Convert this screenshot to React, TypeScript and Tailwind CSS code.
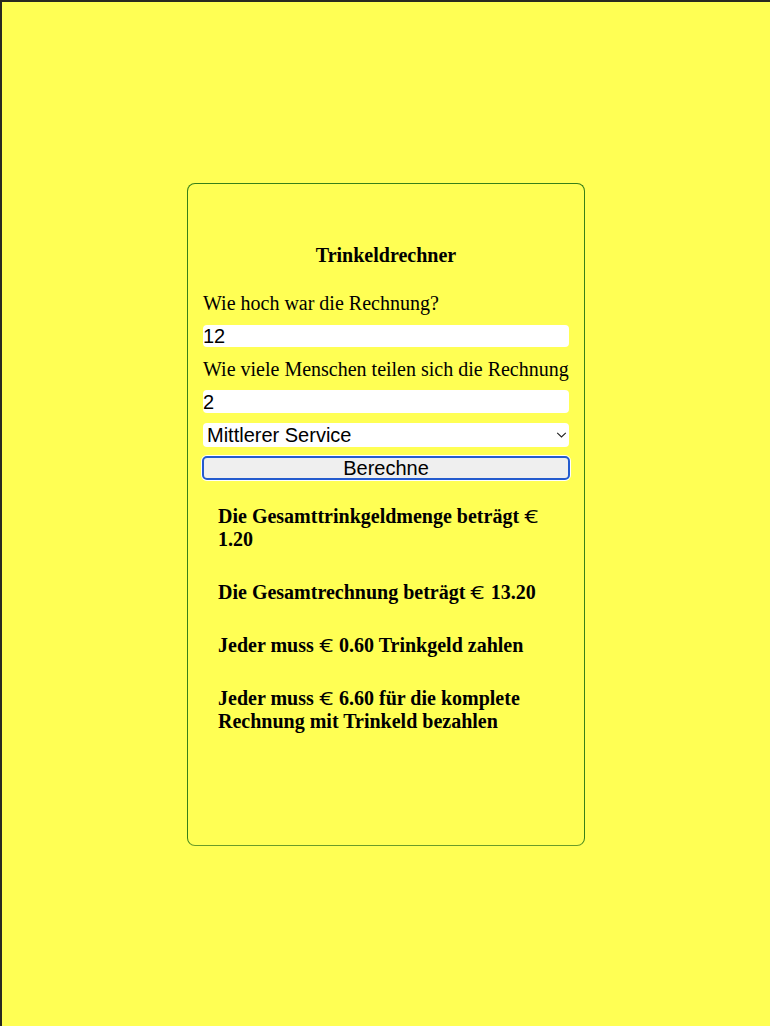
function Euro() {
  return (
    <span className="inline-block w-[15.3px] font-['Open_Sans',sans-serif] text-[18px] leading-none font-normal">
      <span className="inline-block origin-left scale-x-[1.38]">€</span>
    </span>
  );
}

export default function App() {
  return (
    <main className="flex h-[1026px] w-[770px] items-start justify-center border-t-2 border-l-2 border-[#292920] bg-[#ffff54] pt-[181px] font-['Liberation_Serif',serif] text-[20px] leading-[23px] text-black">
      <section className="mr-px h-[663px] w-[398px] rounded-[8px] border border-[#378018] border-b-[#6a9c28] px-[15px] pt-[60px]">
        <h1 className="pl-px text-center font-bold">Trinkeldrechner</h1>
        <div className="mt-[25px] flex flex-col">
          <label htmlFor="bill" className="pl-[0.5px] whitespace-nowrap">Wie hoch war die Rechnung?</label>
          <input id="bill" defaultValue="12" className="mt-[10px] h-[22px] w-full rounded-[4px] bg-white pl-[0.5px] font-['Liberation_Sans',sans-serif]" />
          <label htmlFor="people" className="mt-[11px] pl-[0.5px] whitespace-nowrap">Wie viele Menschen teilen sich die Rechnung</label>
          <input id="people" defaultValue="2" className="mt-[9px] h-[23px] w-full rounded-[4px] bg-white pt-px pl-[0.5px] font-['Liberation_Sans',sans-serif]" />
          <button className="mt-[10px] flex h-[24px] w-full items-center justify-between rounded-[4px] bg-white pr-[2px] pl-[4.5px] font-['Liberation_Sans',sans-serif]">
            Mittlerer Service
            <svg width="11" height="6" viewBox="0 0 11 6" fill="none" stroke="#222" strokeWidth="1.1"><path d="M1.2 .8L5.5 4.9L9.8 .8" /></svg>
          </button>
          <button className="mt-[10px] h-[22px] w-full rounded-[4px] bg-[#efefef] pl-px font-['Liberation_Sans',sans-serif] leading-[22px] shadow-[0_0_0_2px_white] outline-2 -outline-offset-1 outline-[#245bce]">Berechne</button>
        </div>
        <div className="mt-[26px] flex flex-col gap-[30px] pr-[14px] pl-[15.5px] font-bold">
          <p className="h-[46px]">Die Gesamttrinkgeldmenge beträgt <Euro /><br />1.20</p>
          <p className="h-[23px]">Die Gesamtrechnung beträgt <Euro /> 13.20</p>
          <p className="h-[23px]">Jeder muss <Euro /> 0.60 Trinkgeld zahlen</p>
          <p className="h-[46px]">Jeder muss <Euro /> 6.60 für die komplete<br />Rechnung mit Trinkeld bezahlen</p>
        </div>
      </section>
    </main>
  );
}
